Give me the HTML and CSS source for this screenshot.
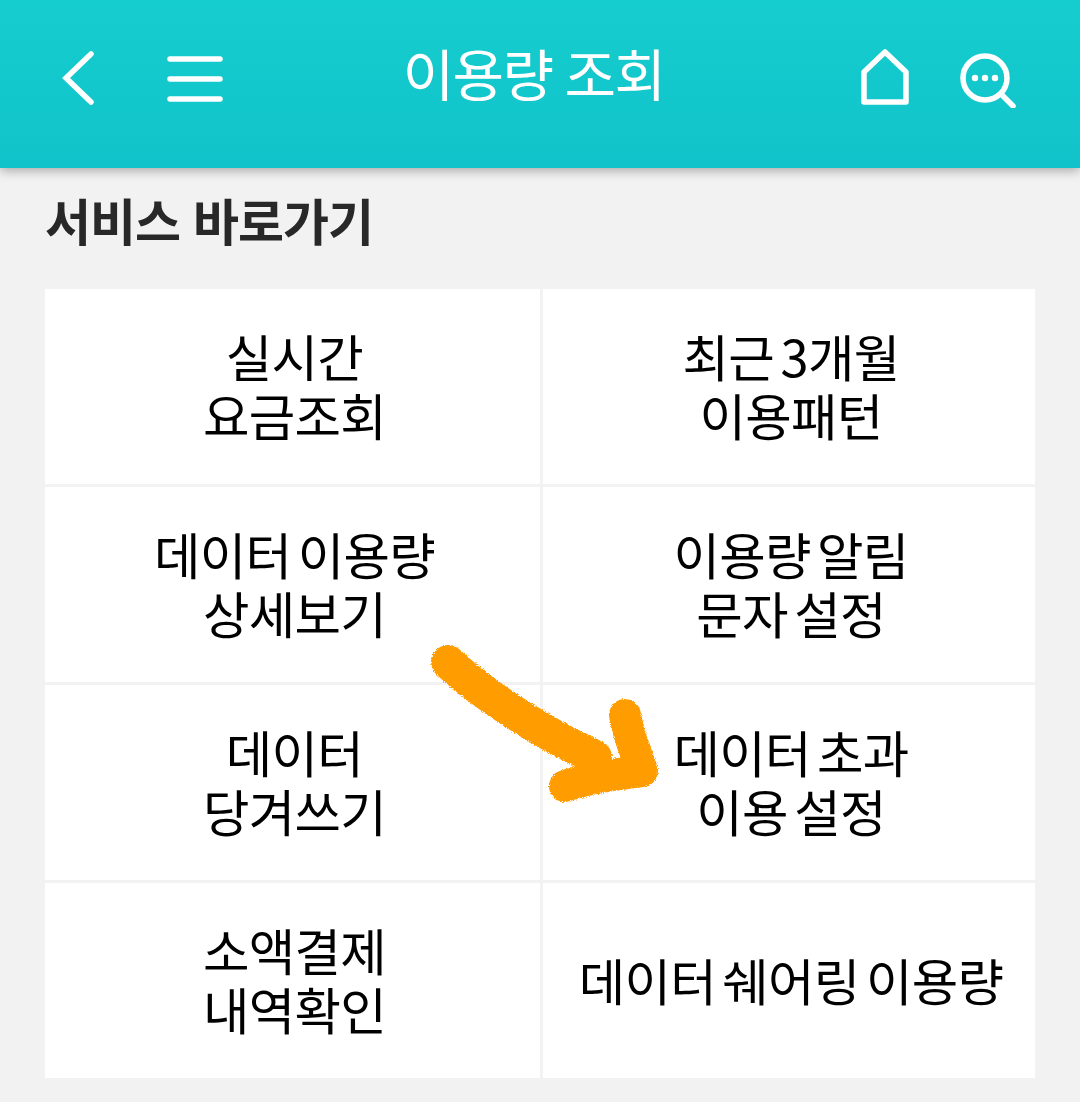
FILE: index.html
```html
<!DOCTYPE html>
<html lang="ko">
<head>
    <meta charset="UTF-8">
    <meta name="viewport" content="width=device-width, initial-scale=1.0">
    <title>이용량 조회</title>
    <link rel="stylesheet" href="styles.css">
</head>
<body>
    <header class="topbar">
        <div class="topbar-left">
            <svg class="icon-back" width="40" height="60" viewBox="0 0 40 60">
                <path d="M31 6 L6 30 L31 54" />
            </svg>
            <svg class="icon-menu" width="60" height="50" viewBox="0 0 60 50">
                <path d="M5 6 H55 M5 26 H55 M5 46 H55" />
            </svg>
        </div>
        <h1 class="title">이용량 조회</h1>
        <div class="topbar-right">
            <svg class="icon-home" width="52" height="60" viewBox="0 0 52 60">
                <path d="M5 24 L26 4 L47 24 V54 H5 Z" />
            </svg>
            <svg class="icon-search" width="60" height="60" viewBox="0 0 60 60">
                <circle cx="27" cy="30" r="22" />
                <path d="M44 47 L55 58" />
                <circle class="dot" cx="17" cy="30" r="3.2" />
                <circle class="dot" cx="27" cy="30" r="3.2" />
                <circle class="dot" cx="37" cy="30" r="3.2" />
            </svg>
        </div>
    </header>

    <main class="content">
        <h2 class="section-title">서비스 바로가기</h2>
        <div class="grid">
            <div class="cell">실시간<br>요금조회</div>
            <div class="cell">최근 3개월<br>이용패턴</div>
            <div class="cell">데이터 이용량<br>상세보기</div>
            <div class="cell">이용량 알림<br>문자 설정</div>
            <div class="cell">데이터<br>당겨쓰기</div>
            <div class="cell">데이터 초과<br>이용 설정</div>
            <div class="cell">소액결제<br>내역확인</div>
            <div class="cell">데이터 쉐어링 이용량</div>
        </div>
    </main>

    <!-- hand drawn arrow over the grid -->
    <svg class="arrow" width="260" height="190" viewBox="0 0 260 190">
        <filter id="grain" filterUnits="userSpaceOnUse" x="0" y="0" width="260" height="190">
            <feTurbulence type="fractalNoise" baseFrequency="1.1" numOctaves="2" seed="4" />
            <feDisplacementMap in="SourceGraphic" scale="4" xChannelSelector="R" yChannelSelector="G" />
        </filter>
        <g filter="url(#grain)">
            <path class="arrow-shaft" d="M28 32 C62 64 120 102 175 127" />
            <path class="arrow-head" d="M205 85 C209 108 216 122 222 141 C195 144 168 148 145 156" />
        </g>
    </svg>
</body>
</html>
```

FILE: styles.css
```css
* {
    margin: 0;
    padding: 0;
    box-sizing: border-box;
}

body {
    background: #f2f2f2;
    font-family: "Noto Sans CJK KR", "Noto Sans", sans-serif;
    height: 1102px;
    overflow: hidden;
    position: relative;
}

.topbar {
    height: 168px;
    background: linear-gradient(#16cdce, #10c3ca);
    box-shadow: 0 3px 10px rgba(0, 0, 0, 0.3);
    display: flex;
    justify-content: space-between;
    align-items: center;
    padding: 0 62px 12px 60px;
    position: relative;
}

.topbar svg {
    fill: none;
    stroke: #fff;
    stroke-width: 5.5;
    stroke-linecap: round;
}

.topbar-left {
    display: flex;
    align-items: center;
    gap: 65px;
}

.topbar-right {
    display: flex;
    align-items: center;
    gap: 47px;
}

.icon-home {
    stroke-linejoin: round;
}

.topbar svg .dot {
    fill: #fff;
    stroke: none;
}

.title {
    position: absolute;
    left: 0;
    right: 13px;
    top: 34px;
    text-align: center;
    color: #fff;
    font-size: 56px;
    line-height: 76px;
    font-weight: 400;
    letter-spacing: -1.6px;
    word-spacing: -2px;
}

.content {
    padding: 0 45px;
}

.section-title {
    font-size: 50px;
    line-height: 70px;
    font-weight: 700;
    color: #282828;
    padding-top: 16px;
    height: 121px;
    letter-spacing: -1px;
}

.grid {
    display: grid;
    grid-template-columns: 495px 492px;
    grid-auto-rows: 195px;
    gap: 3px;
}

.cell {
    background: #fff;
    color: #000;
    display: flex;
    align-items: center;
    justify-content: center;
    text-align: center;
    padding: 0 0 3px 4px;
    font-size: 50.5px;
    line-height: 59px;
    letter-spacing: -0.7px;
    word-spacing: -7px;
}

.arrow {
    position: absolute;
    left: 420px;
    top: 630px;
    fill: none;
    stroke: #ff9c05;
    stroke-linecap: round;
    stroke-linejoin: round;
}

.arrow-shaft {
    stroke-width: 34;
}

.arrow-head {
    stroke-width: 32;
}
```
